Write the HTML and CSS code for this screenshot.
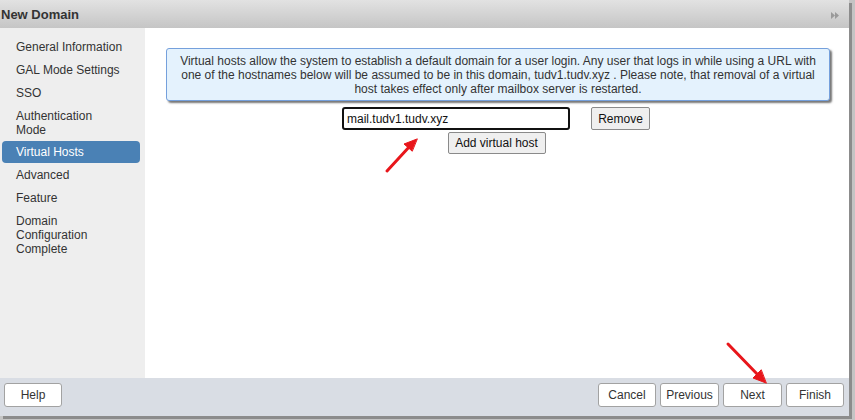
FILE: index.html
```html
<!DOCTYPE html>
<html>
<head>
<meta charset="utf-8">
<link rel="stylesheet" href="styles.css">
</head>
<body>
<div class="dialog">
  <div class="titlebar">
    <span class="title">New Domain</span>
    <svg class="expand" width="8" height="7" viewBox="0 0 8 7"><path d="M0 0 L4 3.5 L0 7 Z M4 0 L8 3.5 L4 7 Z" fill="#9a9a9a"/></svg>
  </div>
  <div class="main">
    <ul class="nav">
      <li class="nav-item">General Information</li>
      <li class="nav-item">GAL Mode Settings</li>
      <li class="nav-item">SSO</li>
      <li class="nav-item tight">Authentication<br>Mode</li>
      <li class="nav-item selected">Virtual Hosts</li>
      <li class="nav-item">Advanced</li>
      <li class="nav-item">Feature</li>
      <li class="nav-item">Domain<br>Configuration<br>Complete</li>
    </ul>
    <div class="content">
      <div class="info">Virtual hosts allow the system to establish a default domain for a user login. Any user that logs in while using a URL with<br>one of the hostnames below will be assumed to be in this domain, tudv1.tudv.xyz . Please note, that removal of a virtual<br>host takes effect only after mailbox server is restarted.</div>
      <div class="host-row">
        <input class="host-input" type="text" value="mail.tudv1.tudv.xyz">
        <button class="gbtn remove">Remove</button>
      </div>
      <div class="add-row">
        <button class="gbtn add">Add virtual host</button>
      </div>
    </div>
  </div>
  <div class="footer">
    <button class="fbtn">Help</button>
    <div class="spacer"></div>
    <button class="fbtn">Cancel</button>
    <button class="fbtn wide">Previous</button>
    <button class="fbtn wide">Next</button>
    <button class="fbtn">Finish</button>
  </div>
</div>
<svg class="annotations" width="855" height="420" viewBox="0 0 855 420">
  <g stroke="#e8161b" stroke-width="3" stroke-linecap="round" fill="#e8161b">
    <line x1="387" y1="171" x2="410" y2="146"/>
    <path d="M417 139 L404 144 L412 151 Z" stroke-width="1"/>
    <line x1="728" y1="344" x2="759" y2="376"/>
    <path d="M766 383 L753 378 L761 370 Z" stroke-width="1"/>
  </g>
</svg>
</body>
</html>
```
FILE: styles.css
```css
html, body {
  margin: 0;
  padding: 0;
}
body {
  width: 855px;
  height: 420px;
  background: #c4c4c4;
  font-family: "Liberation Sans", Arial, sans-serif;
  font-size: 12px;
  color: #333;
  position: relative;
  overflow: hidden;
}
.dialog {
  width: 849px;
  height: 416px;
  display: flex;
  flex-direction: column;
  background: #fff;
  box-shadow: 3px 3px 0 #8c8c8c;
}
.titlebar {
  height: 28px;
  flex: none;
  display: flex;
  align-items: center;
  justify-content: space-between;
  padding: 0 10px 0 1px;
  background: linear-gradient(#e2e2e2, #c5c5c5);
  box-sizing: border-box;
}
.title {
  font-weight: bold;
  font-size: 13px;
  color: #333;
  padding-top: 1px;
}
.expand {
  margin-top: 2px;
}
.main {
  flex: 1;
  display: flex;
  min-height: 0;
}
.nav {
  list-style: none;
  margin: 0;
  padding: 8px 5px 0 2px;
  width: 145px;
  box-sizing: border-box;
  background: #eeeeee;
  display: flex;
  flex-direction: column;
  gap: 1px;
}
.nav-item {
  padding: 4px 0 4px 14px;
  line-height: 14px;
  border-radius: 4px;
  color: #333;
}
.nav-item.tight {
  padding-bottom: 3px;
}
.nav-item.selected {
  background: #4a81b5;
  color: #fff;
}
.content {
  flex: 1;
  padding: 20px 17px 0 21px;
  display: flex;
  flex-direction: column;
  align-items: stretch;
}
.info {
  background: #e4f2fd;
  border: 1px solid #75a0dc;
  border-radius: 3px;
  box-shadow: 2px 2px 2px #777;
  text-align: center;
  line-height: 14px;
  padding: 5px 4px 4px;
  color: #333;
  margin-right: 2px;
}
.host-row {
  display: flex;
  justify-content: center;
  gap: 21px;
  margin-top: 6px;
  padding-right: 6px;
}
.host-input {
  width: 228px;
  height: 23px;
  box-sizing: border-box;
  border: 2px solid #111;
  border-radius: 3px;
  padding: 0 3px;
  font-family: "Liberation Sans", Arial, sans-serif;
  font-size: 12px;
  color: #111;
  outline: none;
}
.gbtn {
  background: #efefef;
  border: 1px solid #8a8a8a;
  border-radius: 2px;
  font-family: "Liberation Sans", Arial, sans-serif;
  font-size: 12px;
  color: #111;
  padding: 0;
  box-sizing: border-box;
}
.remove {
  width: 59px;
  height: 23px;
}
.add-row {
  display: flex;
  justify-content: center;
  margin-top: 2px;
  padding-right: 5px;
}
.add {
  width: 98px;
  height: 22px;
}
.footer {
  height: 38px;
  flex: none;
  background: #d9dde4;
  display: flex;
  align-items: flex-start;
  gap: 4px;
  padding: 5px 5px 0 4px;
  box-sizing: border-box;
}
.spacer {
  flex: 1;
}
.fbtn {
  width: 58px;
  height: 24px;
  background: #fff;
  border: 1px solid #a2a2a2;
  border-radius: 3px;
  font-family: "Liberation Sans", Arial, sans-serif;
  font-size: 12px;
  color: #333;
  padding: 0;
  box-sizing: border-box;
}
.fbtn.wide {
  width: 59px;
}
.annotations {
  position: absolute;
  left: 0;
  top: 0;
  pointer-events: none;
}
```
